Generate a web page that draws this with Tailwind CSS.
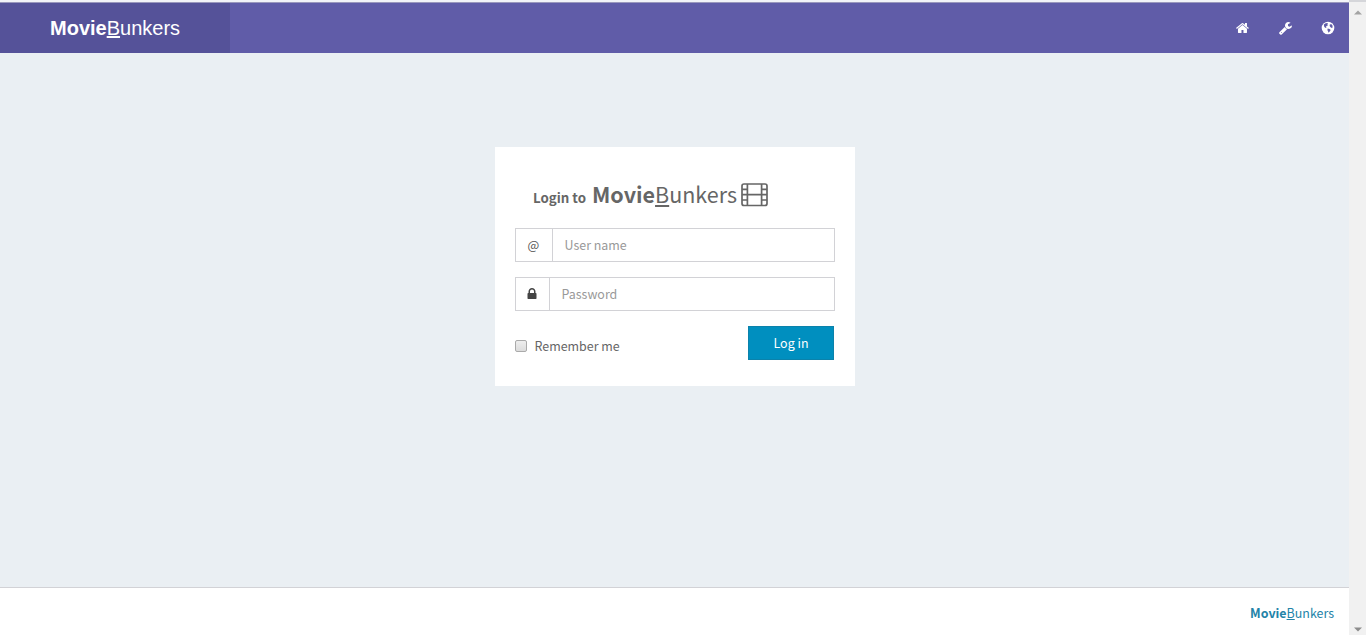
<!DOCTYPE html>
<html lang="en">
<head>
<meta charset="utf-8">
<title>MovieBunkers</title>
<script src="https://cdn.jsdelivr.net/npm/@tailwindcss/browser@4"></script>
</head>
<body class="h-[635px] overflow-hidden flex bg-[#eaeff3] font-['Noto_Sans_CJK_SC','Noto_Sans',sans-serif] text-[12.45px] text-[#666]">
<div class="w-[1349px] h-full flex flex-col">
  <header class="h-[53px] shrink-0 border-t-2 border-[#f2f3f8] bg-[#605ca8] flex justify-between">
    <div class="w-full flex justify-between border-t border-[#9a98bd]">
    <a class="w-[230px] bg-[#555299] text-white text-[20px] leading-[50px] pl-[50px] font-['Liberation_Sans',sans-serif]"><b>Movie</b><u>B</u>unkers</a>
    <nav class="flex items-center gap-[29px] pr-[14px] text-white">
      <svg class="size-[14px]" viewBox="-60 0 1792 1792" fill="currentColor"><path d="M1472 992v480q0 26-19 45t-45 19h-384v-384h-256v384h-384q-26 0-45-19t-19-45v-480q0-1 .5-3t.5-3l575-474 575 474q1 2 1 6zm223-69l-62 74q-8 9-21 11h-3q-13 0-21-7l-692-577-692 577q-12 8-24 7-13-2-21-11l-62-74q-8-10-7-23.5t11-21.5l719-599q32-26 76-26t76 26l244 204v-195q0-14 9-23t23-9h192q14 0 23 9t9 23v408l219 182q10 8 11 21.5t-7 23.5z"/></svg>
      <svg class="size-[14px]" viewBox="-60 0 1792 1792" fill="currentColor"><path d="M448 1472q0-26-19-45t-45-19-45 19-19 45 19 45 45 19 45-19 19-45zm644-420l-682 682q-37 37-90 37-52 0-91-37l-106-108q-38-36-38-90 0-53 38-91l681-681q39 98 114.5 173.5t173.5 114.5zm634-435q0 39-23 106-47 134-164.5 217.5t-258.5 83.5q-185 0-316.5-131.5t-131.5-316.5 131.5-316.5 316.5-131.5q58 0 121.5 16.5t107.5 46.5q16 11 16 28t-16 28l-293 169v224l193 107q5-3 79-48.5t135.5-81 70.5-35.5q15 0 23.5 10t8.5 25z"/></svg>
      <svg class="size-[14px]" viewBox="0 0 14 14"><circle cx="7" cy="7" r="6.3" fill="currentColor"/><path d="M2.8 3.5 4.6 2.2 6.4 2 7 2.9 6.2 3.6 7 4.3 5.6 5.1 4.9 6.1 5.6 6.9 4.8 7.1 3.3 5.9ZM8.6 3.7 10.1 2.9 11.5 4.6 11.6 6.4 10.8 6.9 9.6 6.3 8.8 5.2ZM6.7 7.6 8.6 8 9.7 9 8.7 10.4 7.5 11.7 7 10.2 6.4 9Z" fill="#605ca8"/></svg>
    </nav>
    </div>
  </header>
  <main class="flex-1 pt-[94px]">
    <form class="ml-[495px] w-[360px] h-[239px] bg-white px-5 pt-[27px]">
      <h1 class="h-[40px] ml-[18px] mb-[14px] flex items-baseline whitespace-nowrap leading-[40px]">
        <b class="text-[13.3px] w-[59px]">Login to</b>
        <span class="text-[21.5px] w-[149px]"><b>Movie</b><u>B</u>unkers</span>
        <svg class="w-[27px] h-[24px] self-start mt-[9px]" viewBox="0 0 27 24" fill="none" stroke="currentColor" stroke-width="1.7"><rect x="1" y="1" width="25" height="21.5" rx="2"/><path d="M6.4 1v21.5M20.6 1v21.5M6.4 11.7h14.2M1 6.4h5.4M1 11.7h5.4M1 17h5.4M20.6 6.4H26M20.6 11.7H26M20.6 17H26"/></svg>
      </h1>
      <div class="h-[34px] border border-[#d2d2d6] flex items-center mb-[15px]">
        <span class="w-[37px] h-full border-r border-[#d2d2d6] flex items-center justify-center text-[#555] pr-px">@</span>
        <span class="pl-[11.5px] text-[#999]">User name</span>
      </div>
      <div class="h-[34px] border border-[#d2d2d6] flex items-center mb-[15px]">
        <span class="w-[34px] h-full border-r border-[#d2d2d6] flex items-center justify-center text-[#444] pr-px"><svg class="size-[14px]" viewBox="0 0 1792 1792" fill="currentColor"><path d="M640 768h512v-192q0-106-75-181t-181-75-181 75-75 181v192zm832 96v576q0 40-28 68t-68 28h-960q-40 0-68-28t-28-68v-576q0-40 28-68t68-28h32v-192q0-184 132-316t316-132 316 132 132 316v192h32q40 0 68 28t28 68z"/></svg></span>
        <span class="pl-[11.5px] text-[#999]">Password</span>
      </div>
      <div class="flex justify-between pr-px">
        <label class="flex items-center h-[40px] gap-[7.5px]"><span class="size-3 rounded-[2px] border border-[#aaa] bg-linear-to-b from-[#eee] to-[#dcdcdc]"></span>Remember me</label>
        <button type="button" class="w-[86px] h-[34px] bg-[#008fbf] border border-[#0b82ab] text-white">Log in</button>
      </div>
    </form>
  </main>
  <footer class="h-[48px] shrink-0 bg-white border-t border-[#d2d2d6] text-right pr-[15px] leading-[51px] text-[#2383a8]"><b>Movie</b><u>B</u>unkers</footer>
</div>
<aside class="w-[17px] h-full bg-[#f1f1f1] border-t-2 border-[#d5d6da] flex flex-col justify-between items-center pt-[8px] pb-[3px]">
  <svg class="w-[8px] h-[5px]" viewBox="0 0 8 5"><path d="M0 4.5 4 .5 8 4.5Z" fill="#a3a3a3"/></svg>
  <svg class="w-[8px] h-[5px]" viewBox="0 0 8 5"><path d="M0 .5 4 4.5 8 .5Z" fill="#8c8c8c"/></svg>
</aside>
</body>
</html>
